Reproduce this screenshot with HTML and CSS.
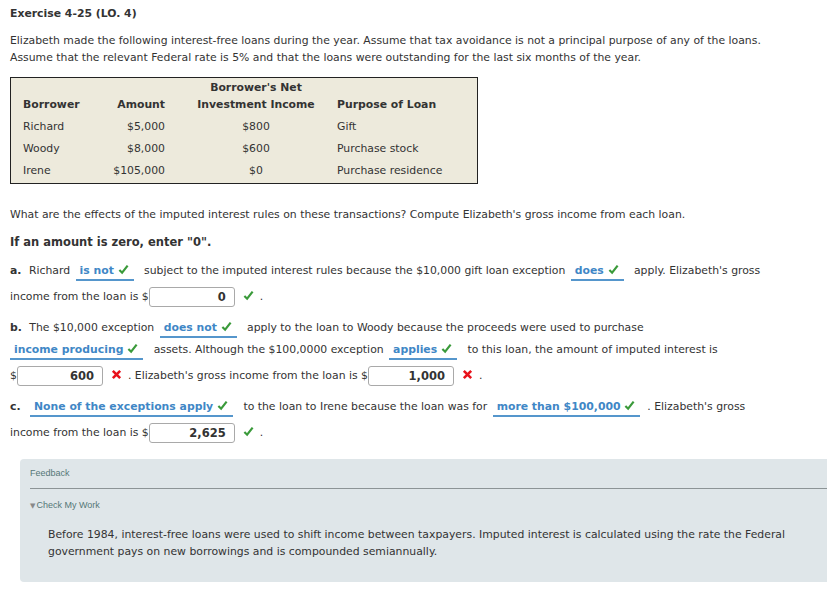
FILE: index.html
```html
<!DOCTYPE html>
<html>
<head>
	<title>Exercise 4-25</title>
	<link rel="stylesheet" href="styles.css">
</head>
<body>
<div class="page">
	<h1 class="title">Exercise 4-25 (LO. 4)</h1>
	<p class="intro">Elizabeth made the following interest-free loans during the year. Assume that tax avoidance is not a principal purpose of any of the loans.<br>Assume that the relevant Federal rate is 5% and that the loans were outstanding for the last six months of the year.</p>

	<table class="loans">
		<thead>
			<tr class="top">
				<th></th>
				<th></th>
				<th class="c-mid">Borrower's Net</th>
				<th></th>
			</tr>
			<tr>
				<th class="c-name">Borrower</th>
				<th class="c-amt">Amount</th>
				<th class="c-mid">Investment Income</th>
				<th class="c-purp">Purpose of Loan</th>
			</tr>
		</thead>
		<tbody>
			<tr>
				<td class="c-name">Richard</td>
				<td class="c-amt">$5,000</td>
				<td class="c-mid">$800</td>
				<td class="c-purp">Gift</td>
			</tr>
			<tr>
				<td class="c-name">Woody</td>
				<td class="c-amt">$8,000</td>
				<td class="c-mid">$600</td>
				<td class="c-purp">Purchase stock</td>
			</tr>
			<tr>
				<td class="c-name">Irene</td>
				<td class="c-amt">$105,000</td>
				<td class="c-mid">$0</td>
				<td class="c-purp">Purchase residence</td>
			</tr>
		</tbody>
	</table>

	<p class="q">What are the effects of the imputed interest rules on these transactions? Compute Elizabeth's gross income from each loan.</p>
	<p class="q strong">If an amount is zero, enter "0".</p>

	<div class="part">
		<b class="lbl">a.</b> Richard <span class="pick">is not <svg class="ok" viewBox="0 0 12 12"><path d="M1.5 6.5 L4.5 9.5 L10.5 1.8"/></svg></span> subject to the imputed interest rules because the $10,000 gift loan exception <span class="pick">does <svg class="ok" viewBox="0 0 12 12"><path d="M1.5 6.5 L4.5 9.5 L10.5 1.8"/></svg></span> apply. Elizabeth's gross<br>
		income from the loan is $<span class="box">0</span><svg class="ok mark" viewBox="0 0 12 12"><path d="M1.5 6.5 L4.5 9.5 L10.5 1.8"/></svg>.
	</div>

	<div class="part">
		<b class="lbl">b.</b> The $10,000 exception <span class="pick">does not <svg class="ok" viewBox="0 0 12 12"><path d="M1.5 6.5 L4.5 9.5 L10.5 1.8"/></svg></span> apply to the loan to Woody because the proceeds were used to purchase<br>
		<span class="pick first">income producing <svg class="ok" viewBox="0 0 12 12"><path d="M1.5 6.5 L4.5 9.5 L10.5 1.8"/></svg></span> assets. Although the $100,0000 exception <span class="pick">applies <svg class="ok" viewBox="0 0 12 12"><path d="M1.5 6.5 L4.5 9.5 L10.5 1.8"/></svg></span> to this loan, the amount of imputed interest is<br>
		$<span class="box">600</span><svg class="bad mark" viewBox="0 0 12 12"><path d="M2 2 L10 10 M10 2 L2 10"/></svg>. Elizabeth's gross income from the loan is $<span class="box">1,000</span><svg class="bad mark" viewBox="0 0 12 12"><path d="M2 2 L10 10 M10 2 L2 10"/></svg>.
	</div>

	<div class="part">
		<b class="lbl">c.</b> <span class="pick">None of the exceptions apply <svg class="ok" viewBox="0 0 12 12"><path d="M1.5 6.5 L4.5 9.5 L10.5 1.8"/></svg></span> to the loan to Irene because the loan was for <span class="pick">more than $100,000 <svg class="ok" viewBox="0 0 12 12"><path d="M1.5 6.5 L4.5 9.5 L10.5 1.8"/></svg></span>. Elizabeth's gross<br>
		income from the loan is $<span class="box">2,625</span><svg class="ok mark" viewBox="0 0 12 12"><path d="M1.5 6.5 L4.5 9.5 L10.5 1.8"/></svg>.
	</div>

	<div class="feedback">
		<div class="fb-head">Feedback</div>
		<div class="fb-toggle"><span class="tri">&#9660;</span>Check My Work</div>
		<p class="fb-text">Before 1984, interest-free loans were used to shift income between taxpayers. Imputed interest is calculated using the rate the Federal<br>government pays on new borrowings and is compounded semiannually.</p>
	</div>
</div>
</body>
</html>
```

FILE: styles.css
```css
body{
	margin: 0;
	background: #fff;
	color: #333;
	font-family: "DejaVu Sans", sans-serif;
	font-size: 10.85px;
	overflow: hidden;
}
.page{
	padding: 5px 0 0 10px;
}
.title{
	margin: 0;
	font-size: 10.85px;
	font-weight: bold;
	line-height: 17px;
}
.intro{
	margin: 10px 0 0;
	line-height: 17px;
}
.loans{
	margin-top: 11px;
	width: 468px;
	border: 1px solid #222;
	border-collapse: collapse;
	background-color: #edeadc;
}
.loans th{
	font-weight: bold;
	height: 17px;
	padding: 0;
}
.loans tr.top th{
	height: 18px;
}
.loans td{
	height: 22px;
	padding: 0;
}
.loans tbody tr:first-child td{
	padding-top: 2px;
}
.loans tbody tr:last-child td{
	padding-bottom: 2px;
}
.c-name{
	width: 77px;
	padding-left: 12px !important;
	text-align: left;
}
.c-amt{
	width: 65px;
	padding-right: 10px !important;
	text-align: right;
}
.c-mid{
	width: 162px;
	text-align: center;
}
.c-purp{
	text-align: left;
}
.q{
	margin: 22px 0 0;
	line-height: 17px;
}
.q.strong{
	margin-top: 11px;
	font-weight: bold;
	font-size: 11.5px;
}
.part{
	margin-top: 9px;
	line-height: 22px;
}
.part + .part{
	margin-top: 5px;
}
.lbl{
	margin-right: 4px;
}
.pick{
	display: inline-block;
	line-height: 17px;
	margin: 0 7px 0 2px;
	padding: 0 5px 0 4px;
	border-bottom: 2px solid #5596cc;
	color: #3f87c6;
	font-weight: bold;
}
.pick.first{
	margin-left: 0;
}
.ok, .bad{
	width: 11px;
	height: 11px;
	vertical-align: -1px;
	fill: none;
	stroke-linecap: butt;
}
.ok{
	stroke: #3a9a3a;
	stroke-width: 2.4;
}
.bad{
	stroke: #e8121b;
	stroke-width: 2.8;
}
.mark{
	margin: 0 6px 0 8px;
}
.box{
	display: inline-block;
	box-sizing: border-box;
	width: 86px;
	height: 20px;
	line-height: 18px;
	margin: 5px 0;
	padding-right: 8px;
	vertical-align: middle;
	border: 1px solid #a9a9a9;
	border-radius: 3px;
	background: #fff;
	text-align: right;
	font-weight: bold;
	font-size: 11.5px;
}
.feedback{
	margin: 11px 0 0 10px;
	width: 840px;
	height: 123px;
	border-radius: 4px;
	background-color: #dfe6e9;
	box-sizing: border-box;
	padding: 7px 0 0 10px;
}
.fb-head{
	font-family: "Liberation Sans", Arial, sans-serif;
	font-size: 9px;
	color: #557777;
	line-height: 14px;
	padding-bottom: 8px;
	border-bottom: 1px solid #8c9496;
}
.fb-toggle{
	font-family: "Liberation Sans", Arial, sans-serif;
	font-size: 9px;
	color: #557777;
	line-height: 14px;
	margin-top: 9px;
}
.tri{
	font-family: "DejaVu Sans", sans-serif;
	font-size: 7px;
	color: #888;
	margin-right: 1px;
}
.fb-text{
	margin: 13px 0 0 18px;
	line-height: 17px;
	color: #333;
}
```
